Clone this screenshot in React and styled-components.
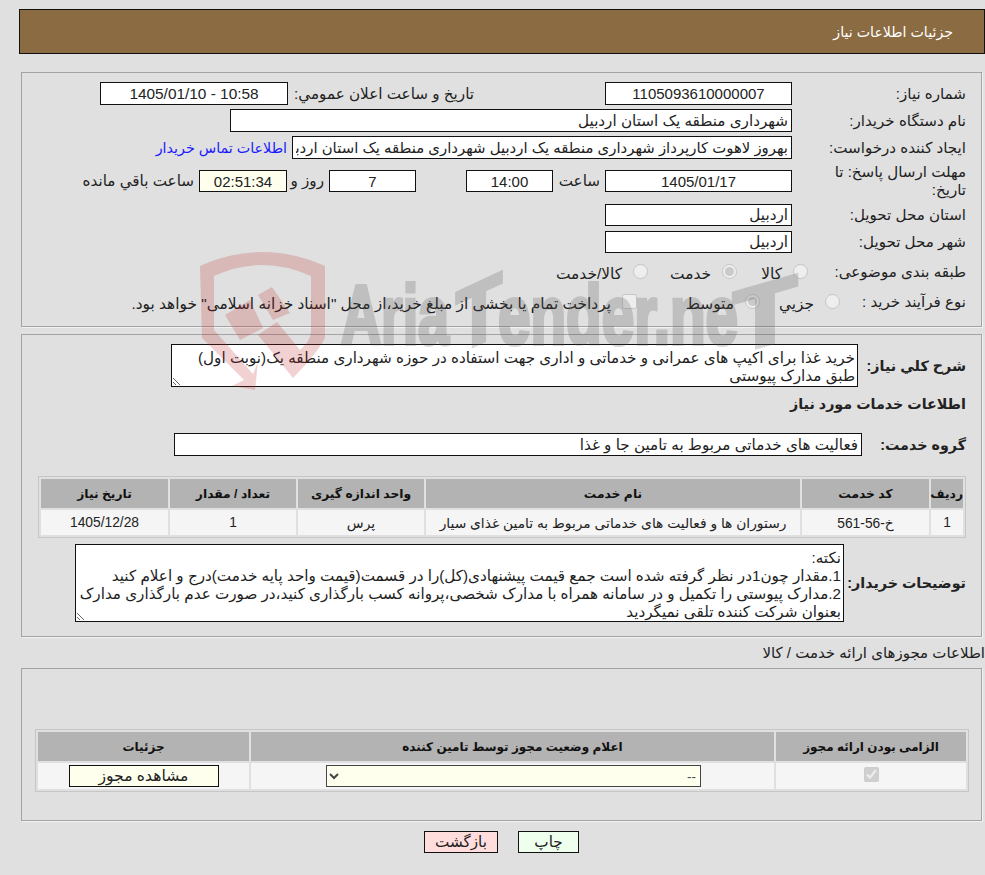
import React from "react";
import styled, { createGlobalStyle } from "styled-components";

const Global = createGlobalStyle`
  html, body { margin: 0; padding: 0; background: #e0e0e0; }
  body { font-family: "Liberation Sans", "DejaVu Sans", sans-serif; font-size: 15.2px; color: #222; }
`;

const Page = styled.div`
  position: relative;
  direction: rtl;
  width: 985px;
  height: 875px;
  overflow: hidden;
`;

const Watermark = styled.svg`
  position: absolute;
  left: 0;
  top: 0;
  width: 985px;
  height: 400px;
  pointer-events: none;
  z-index: 3;
`;

const Header = styled.div`
  margin: 9px 0 0 19px;
  height: 43px;
  border: 1px solid #111;
  background: #8b6b42;
  color: #fff;
  display: flex;
  align-items: center;
  padding-right: 31px;
  font-size: 14.2px;
`;

const Panel = styled.div`
  margin: ${(p) => p.$top}px 3px 0 21px;
  padding: ${(p) => p.$pt}px ${(p) => p.$px}px 0;
  height: ${(p) => p.$h}px;
  box-sizing: border-box;
  border: 1px solid #a3a3a3;
  box-shadow: 1px 1px 0 #f2f2f2;
`;

const Row = styled.div`
  display: flex;
  align-items: center;
  height: ${(p) => p.$h}px;
  margin-top: ${(p) => p.$mt || 0}px;
`;

const RowLabel = styled.div`
  flex: none;
  width: ${(p) => p.$w || 174}px;
  font-weight: ${(p) => (p.$bold ? 700 : 400)};
  font-size: ${(p) => (p.$bold ? "14.3px" : "15.1px")};
  line-height: 18px;
  white-space: nowrap;
`;

const Field = styled.input.attrs({ readOnly: true })`
  flex: none;
  box-sizing: border-box;
  width: ${(p) => p.$w}px;
  height: ${(p) => p.$h || 23}px;
  padding: 0 3px;
  margin: 0;
  border: 1px solid #111;
  border-radius: 0;
  outline: none;
  background: ${(p) => p.$bg || "#fff"};
  color: #222;
  font: inherit;
  font-size: ${(p) => p.$fs || 15.2}px;
  text-align: ${(p) => (p.$center ? "center" : "right")};
`;

const InlineLabel = styled.div`
  flex: none;
  width: ${(p) => p.$w}px;
  padding-right: ${(p) => p.$pr ?? 5}px;
  box-sizing: border-box;
  white-space: nowrap;
`;

const Spacer = styled.div`
  flex: none;
  width: ${(p) => p.$w}px;
`;

const BlueLink = styled.a`
  color: #1a1aff;
  margin-right: 5px;
  font-size: 14.3px;
  text-decoration: none;
  white-space: nowrap;
`;

const Option = styled.label`
  flex: none;
  display: flex;
  align-items: center;
  padding-top: 4px;
  font-size: 15.4px;
  width: ${(p) => (p.$w ? `${p.$w}px` : "auto")};
  white-space: nowrap;
`;

const Radio = styled.input.attrs({ type: "radio", disabled: true })`
  flex: none;
  width: 15px;
  height: 15px;
  margin: -6px 0 0 11px;
`;

const Check = styled.input.attrs({ type: "checkbox", disabled: true })`
  flex: none;
  width: 15px;
  height: 15px;
  margin: ${(p) => p.$m || "0"};
`;

const Note = styled.textarea.attrs({ readOnly: true })`
  flex: none;
  box-sizing: border-box;
  width: ${(p) => p.$w}px;
  height: ${(p) => p.$h}px;
  margin: 0;
  padding: 4px 2px 0;
  border: 1px solid #111;
  border-radius: 0;
  outline: none;
  background: #fff;
  color: #222;
  font: inherit;
  line-height: 18px;
  overflow: hidden;
`;

const DataTable = styled.table`
  border-collapse: separate;
  border-spacing: 2px;
  width: ${(p) => p.$w}px;
  margin: ${(p) => p.$m || "0"};
  border: 1px solid #c6c6c6;
  table-layout: fixed;
  font-size: ${(p) => p.$fs}px;
`;

const Th = styled.th`
  background: #b3b3b3;
  height: 29px;
  padding: 0;
  font-size: inherit;
  font-weight: 700;
  color: #111;
`;

const Td = styled.td`
  background: #f5f5f5;
  height: ${(p) => p.$h || 25}px;
  padding: 0;
  text-align: center;
  font-size: 13.8px;
`;

const CellButton = styled.button`
  box-sizing: border-box;
  width: 150px;
  height: 22px;
  padding: 0;
  border: 1px solid #111;
  border-radius: 0;
  background: #ffffee;
  color: #222;
  font: inherit;
  font-size: 15.6px;
`;

const SelectBox = styled.select`
  box-sizing: border-box;
  display: block;
  width: 375px;
  height: 22px;
  margin: 0 auto;
  position: relative;
  left: 1px;
  border: 1px solid #444;
  border-radius: 0;
  background: #ffffee;
  color: #444;
  font: inherit;
  font-size: 13.33px;
`;

const SubTitle = styled.div`
  margin: 7px 0 0;
  height: 24px;
  line-height: 18px;
  font-size: 15px;
  white-space: nowrap;
`;

const Actions = styled.div`
  display: flex;
  gap: 20px;
  margin: 10px 406px 0 0;
`;

const ActionButton = styled.button`
  box-sizing: border-box;
  width: ${(p) => p.$w}px;
  height: 22px;
  padding: 0;
  border: 1px solid #111;
  border-radius: 0;
  background: ${(p) => p.$bg};
  color: #222;
  font: inherit;
`;

const serviceCols = [32, 127, 374, 126, 126, 127];
const licenseCols = [190, 523, 211];

export default function App() {
  return (
    <Page>
      <Global />
      <Watermark viewBox="0 0 985 400">
        <g opacity="0.2" fill="#be1e1e">
          <path
            fillRule="evenodd"
            d="M200 266 Q262 238 325 266 L325 338 Q318 352 293 378 L272 352 L258 335 L277 322 L300 350 Q311 340 311 332 L311 276 Q262 254 214 276 L214 330 L253 374 L258 362 L255 390 L232 386 L244 380 L202 338 Z"
          />
          <path d="M225 315 L250 300 L263 328 L240 340 Z" />
          <path d="M258 295 L272 287 L290 313 L273 320 Z" />
        </g>
        <g opacity="0.22" fill="#505050" stroke="#505050" strokeWidth="4" fontFamily="'Liberation Sans', sans-serif" fontWeight="700" style={{ direction: "ltr" }}>
          <text x="341" y="344" fontSize="84" textLength="108" lengthAdjust="spacingAndGlyphs">Aria</text>
          <text transform="translate(456 354) skewY(-25)" fontSize="88" textLength="46" lengthAdjust="spacingAndGlyphs">T</text>
          <text x="498" y="344" fontSize="84" textLength="240" lengthAdjust="spacingAndGlyphs">ender.ne</text>
          <text transform="translate(733 354) skewY(-16)" fontSize="88" textLength="64" lengthAdjust="spacingAndGlyphs">T</text>
        </g>
      </Watermark>

      <Header>جزئیات اطلاعات نیاز</Header>

      <Panel $top={18} $h={255} $pt={9} $px={15}>
        <Row $h={23}>
          <RowLabel>شماره نیاز:</RowLabel>
          <Field $w={187} $center $fs={15} value="1105093610000007" />
          <Spacer $w={131} />
          <InlineLabel $w={186} $pr={0}>تاریخ و ساعت اعلان عمومي:</InlineLabel>
          <Field $w={188} $center $fs={15.4} value="10:58 - 1405/01/10" />
        </Row>
        <Row $h={23} $mt={4}>
          <RowLabel>نام دستگاه خریدار:</RowLabel>
          <Field $w={562} value="شهرداری منطقه یک استان اردبیل" />
        </Row>
        <Row $h={23} $mt={4}>
          <RowLabel>ایجاد کننده درخواست:</RowLabel>
          <Field $w={500} $fs={14.9} value="بهروز لاهوت کارپرداز شهرداری منطقه یک اردبیل شهرداری منطقه یک استان اردبیل" />
          <BlueLink href="#">اطلاعات تماس خریدار</BlueLink>
        </Row>
        <Row $h={36} $mt={4}>
          <RowLabel>مهلت ارسال پاسخ: تا<br />تاریخ:</RowLabel>
          <Field $w={187} $h={22} $center $fs={15} value="1405/01/17" />
          <InlineLabel $w={52}>ساعت</InlineLabel>
          <Field $w={87} $h={22} $center $fs={15} value="14:00" />
          <Spacer $w={50} />
          <Field $w={87} $h={22} $center $fs={15} value="7" />
          <InlineLabel $w={42}>روز و</InlineLabel>
          <Field $w={88} $h={22} $center $fs={15} $bg="#ffffee" value="02:51:34" />
          <InlineLabel $w={120}>ساعت باقي مانده</InlineLabel>
        </Row>
        <Row $h={22} $mt={5}>
          <RowLabel>استان محل تحویل:</RowLabel>
          <Field $w={187} $h={22} value="اردبیل" />
        </Row>
        <Row $h={22} $mt={5}>
          <RowLabel>شهر محل تحویل:</RowLabel>
          <Field $w={187} $h={22} value="اردبیل" />
        </Row>
        <Row $h={26} $mt={6}>
          <RowLabel $w={158}>طبقه بندی موضوعی:</RowLabel>
          <Option $w={71}><Radio name="kind" />کالا</Option>
          <Option $w={89}><Radio name="kind" defaultChecked />خدمت</Option>
          <Option><Radio name="kind" />کالا/خدمت</Option>
        </Row>
        <Row $h={26} $mt={4}>
          <RowLabel $w={126}>نوع فرآیند خرید :</RowLabel>
          <Option $w={80}><Radio name="proc" />جزيي</Option>
          <Option $w={123}><Radio name="proc" defaultChecked />متوسط</Option>
          <Option>
            <Check $m="-6px 0 0 11px" />
            پرداخت تمام یا بخشی از مبلغ خرید،از محل "اسناد خزانه اسلامی" خواهد بود.
          </Option>
        </Row>
      </Panel>

      <Panel $top={7} $h={303} $pt={9} $px={15}>
        <Row $h={43}>
          <RowLabel $w={108} $bold>شرح کلي نیاز:</RowLabel>
          <Note $w={687} $h={43} value="خرید غذا برای اکیپ های عمرانی و خدماتی و اداری جهت استفاده در حوزه شهرداری منطقه یک(نوبت اول) طبق مدارک پیوستی" />
        </Row>
        <Row $h={24} $mt={5}>
          <RowLabel $w={300} $bold>اطلاعات خدمات مورد نیاز</RowLabel>
        </Row>
        <Row $h={23} $mt={17}>
          <RowLabel $w={104} $bold>گروه خدمت:</RowLabel>
          <Field $w={688} value="فعالیت های خدماتی مربوط به تامین جا و غذا" />
        </Row>
        <DataTable $w={928} $m="20px 0 0 0" $fs={12.3}>
          <colgroup>
            {serviceCols.map((w, i) => <col key={i} style={{ width: w }} />)}
          </colgroup>
          <thead>
            <tr>
              <Th>ردیف</Th><Th>کد خدمت</Th><Th>نام خدمت</Th><Th>واحد اندازه گیری</Th><Th>تعداد / مقدار</Th><Th>تاریخ نیاز</Th>
            </tr>
          </thead>
          <tbody>
            <tr>
              <Td>1</Td><Td>خ-56-561</Td><Td>رستوران ها و فعالیت های خدماتی مربوط به تامین غذای سیار</Td><Td>پرس</Td><Td>1</Td><Td>1405/12/28</Td>
            </tr>
          </tbody>
        </DataTable>
        <Row $h={78} $mt={6}>
          <RowLabel $w={122} $bold>توضیحات خریدار:</RowLabel>
          <Note $w={769} $h={78} value={"نکته:\n1.مقدار چون1در نظر گرفته شده است جمع قیمت پیشنهادی(کل)را در قسمت(قیمت واحد پایه خدمت)درج و اعلام کنید\n2.مدارک پیوستی را تکمیل و در سامانه همراه با مدارک شخصی،پروانه کسب بارگذاری کنید،در صورت عدم بارگذاری مدارک بعنوان شرکت کننده تلقی نمیگردید"} />
        </Row>
      </Panel>

      <SubTitle>اطلاعات مجوزهای ارائه خدمت / کالا</SubTitle>

      <Panel $top={0} $h={153} $pt={60} $px={12}>
        <DataTable $w={934} $fs={12}>
          <colgroup>
            {licenseCols.map((w, i) => <col key={i} style={{ width: w }} />)}
          </colgroup>
          <thead>
            <tr>
              <Th>الزامی بودن ارائه مجوز</Th><Th>اعلام وضعیت مجوز توسط تامین کننده</Th><Th>جزئیات</Th>
            </tr>
          </thead>
          <tbody>
            <tr>
              <Td $h={26}><Check defaultChecked /></Td>
              <Td $h={26}>
                <SelectBox defaultValue="--"><option>--</option></SelectBox>
              </Td>
              <Td $h={26}><CellButton>مشاهده مجوز</CellButton></Td>
            </tr>
          </tbody>
        </DataTable>
      </Panel>

      <Actions>
        <ActionButton $w={61} $bg="#eeffee">چاپ</ActionButton>
        <ActionButton $w={74} $bg="#ffdddd">بازگشت</ActionButton>
      </Actions>
    </Page>
  );
}
